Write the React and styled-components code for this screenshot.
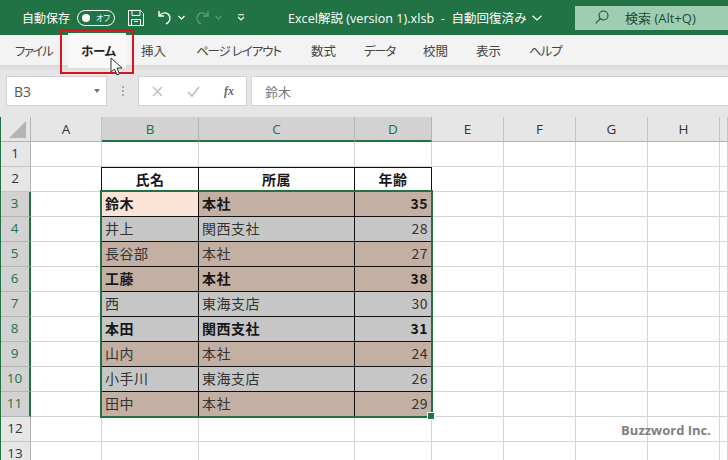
import React from "react";
import styled, { createGlobalStyle } from "styled-components";

const Global = createGlobalStyle`
  html, body { margin: 0; padding: 0; background: #fff; overflow: hidden; }
  #root { width: 728px; height: 460px; }
`;
const JP = `"Open Sans", "Noto Sans CJK JP", sans-serif`;
const Page = styled.div`
  position: relative; width: 728px; height: 460px; overflow: hidden;
  font-family: ${JP}; background: #fff; display: flex; flex-direction: column;
`;
const TitleBar = styled.header`
  height: 35px; flex: none; background: #217346; color: #fff;
  display: flex; align-items: center; font-size: 12px; padding-left: 22px; box-sizing: border-box;
`;
const Autosave = styled.span` width: 48px; font-size: 12px; white-space: nowrap; `;
const Toggle = styled.span`
  box-sizing: border-box; margin-left: 7px; width: 38px; height: 16px; border: 1px solid #fff; border-radius: 8px;
  display: flex; align-items: center; padding: 0 4px; gap: 6px; font-size: 8px; flex: none; font-feature-settings: "palt"; white-space: nowrap;
  i { width: 8px; height: 8px; border-radius: 50%; background: #fff; flex: none; }
`;
const QatIcon = styled.svg`
  flex: none; margin-left: ${p => p.$gap}px; display: block; fill: none; stroke: ${p => p.$dim ? "#5d9a78" : "#fff"};
`;
const DocTitle = styled.span`
  margin-left: 43px; font-size: 12.5px; white-space: pre; width: 256px; flex: none; display: flex; align-items: center; gap: 5px; letter-spacing: 0.05px;
  svg { flex: none; }
`;
const Search = styled.div`
  margin-left: auto; width: 153px; height: 24px; align-self: flex-start; margin-top: 6px; background: #9fcdb1; color: #1d4a33;
  display: flex; align-items: center; font-size: 13px; padding: 0 0 2px 20px; gap: 16px; box-sizing: border-box; white-space: nowrap;
`;
const Tabs = styled.nav`
  height: 30px; flex: none; background: #f3f3f3; display: flex; align-items: center; gap: 29px; padding-left: 15px;
  font-size: 12.5px; color: #444; box-sizing: border-box; font-feature-settings: "palt";
`;
const Tab = styled.span`
  width: ${p => p.$w}px; flex: none; letter-spacing: ${p => p.$track || 0}px;
  white-space: nowrap; position: relative; z-index: 0; font-weight: ${p => p.$active ? 700 : 400}; color: ${p => p.$active ? "#222" : "#444"};
  ${p => p.$active && `&::before { content: ""; position: absolute; z-index: -1; inset: -8px -14px -8px -13px; background: #f9f8f7; }`}
`;
const FormulaArea = styled.section`
  height: 52px; flex: none; background: linear-gradient(#d8d8d8 0, #e6e6e6 7px); display: flex; padding: 11px 0 0 6px;
  box-sizing: border-box; align-items: flex-start;
`;
const NameBox = styled.div`
  box-sizing: border-box; width: 101px; height: 30px; background: #fff; border: 1px solid #d2d2d2; font-size: 14px; color: #555;
  display: flex; align-items: center; justify-content: space-between; padding: 0 6px 0 7px;
  i { width: 0; height: 0; border: 3.5px solid transparent; border-top: 4px solid #777; margin-top: 3px; }
`;
const Dots = styled.div`
  width: 31px; height: 30px; display: flex; flex-direction: column; align-items: center; justify-content: center; gap: 2px;
  i { width: 2px; height: 2px; background: #aaa; }
`;
const FnBox = styled.div`
  box-sizing: border-box; width: 109px; height: 30px; background: #fff; border: 1px solid #d2d2d2; display: flex; align-items: center;
  padding-left: 13px; gap: 24px; color: #666;
`;
const Fx = styled.span` font-family: "Liberation Serif", serif; font-style: italic; font-weight: 700; font-size: 12px; color: #666; `;
const Input = styled.div`
  box-sizing: border-box; margin-left: 4px; flex: 1; height: 30px; background: #fff; border: 1px solid #d2d2d2; border-right: 0;
  font-size: 13px; color: #777; display: flex; align-items: center; padding-left: 13px;
`;
const Sheet = styled.main`
  position: relative; flex: none; display: grid; height: 343px; overflow: hidden;
  grid-template-columns: 31px 71px 97px 156px 77px 72px 72px 72px 72px 8px;
  grid-template-rows: 25px repeat(13, 25px);
  font-size: 14px; color: #222; font-family: "Noto Sans CJK JP", sans-serif;
  &::before { content: ""; position: absolute; left: 0; top: 0; bottom: 0; width: 1px; background: #217346; z-index: 3; }
`;
const Corner = styled.div`
  background: #e6e6e6; border-right: 1px solid #b4b4b4; border-bottom: 1px solid #b4b4b4; box-sizing: border-box; position: relative;
  svg { position: absolute; right: 4px; bottom: 3px; }
`;
const ColHead = styled.div`
  box-sizing: border-box; display: flex; align-items: center; justify-content: center; font-size: 13.5px; font-family: "Open Sans", sans-serif;
  background: ${p => p.$on ? "#d2d2d2" : "#e6e6e6"}; color: ${p => p.$on ? "#217346" : "#333"};
  border-right: 1px solid ${p => p.$on ? "#b4b4b4" : "#c4c4c4"};
  border-bottom: ${p => p.$on ? "2px solid #217346" : "1px solid #b4b4b4"};
`;
const RowHead = styled.div`
  box-sizing: border-box; display: flex; align-items: center; justify-content: center; font-size: 13.5px; font-family: "Open Sans", sans-serif;
  padding-bottom: 2px;
  background: ${p => p.$on ? "#d2d2d2" : "#e6e6e6"}; color: ${p => p.$on ? "#217346" : "#333"};
  border-right: ${p => p.$on ? "2px solid #217346" : "1px solid #b4b4b4"};
  border-bottom: 1px solid ${p => p.$on ? "#b4b4b4" : "#c4c4c4"};
`;
const Cell = styled.div`
  box-sizing: border-box; border-right: 1px solid ${p => p.$edge ? "#111" : "#d4d4d4"}; border-bottom: 1px solid #d4d4d4;
`;
const Data = styled.div`
  box-sizing: border-box; display: flex; align-items: center; white-space: nowrap; overflow: hidden;
  padding: 0 3px 2px; font-size: 14px; letter-spacing: 0.5px; color: ${p => p.$bold ? "#181818" : "#333"};
  justify-content: ${p => p.$align || "flex-start"};
  font-weight: ${p => p.$bold ? 700 : 400};
  background: ${p => p.$bg};
  border-right: 1px solid #111; border-bottom: 1px solid #111;
  ${p => p.$top && "border-top: 1px solid #111;"}
`;
const Selection = styled.div`
  position: absolute; left: 100px; top: 73px; width: 333px; height: 228px; box-sizing: border-box;
  border: 2px solid #217346; pointer-events: none; z-index: 2;
  i { position: absolute; right: -4px; bottom: -4px; width: 6px; height: 6px; background: #217346; border: 1px solid #fff; }
`;
const Watermark = styled.div`
  position: absolute; right: 17px; bottom: 21px; color: #808080; font: 700 13px "Open Sans", sans-serif; z-index: 2;
`;
const Callout = styled.div`
  position: absolute; left: 60px; top: 29px; width: 74px; height: 45px; box-sizing: border-box; border: 2.5px solid #d9141c; z-index: 4;
`;
const Pointer = styled.svg` position: absolute; left: 110px; top: 57px; z-index: 5; `;

const tabs = [
  ["ファイル", 37, -1.5], ["ホーム", 31, -0.3, true], ["挿入", 26, 0], ["ページ レイアウト", 86, -1.1],
  ["数式", 24, 0], ["データ", 30, -1.3], ["校閲", 24, 0], ["表示", 24, 0], ["ヘルプ", 32, -1],
];
const cols = ["A", "B", "C", "D", "E", "F", "G", "H", ""];
const T = "#c3b0a3", G = "#c6c6c6", P = "#fbe3d6";
const rows = [
  ["鈴木", "本社", 35, T, true, P],
  ["井上", "関西支社", 28, G],
  ["長谷部", "本社", 27, T],
  ["工藤", "本社", 38, T, true],
  ["西", "東海支店", 30, G],
  ["本田", "関西支社", 31, G, true],
  ["山内", "本社", 24, T],
  ["小手川", "東海支店", 26, G],
  ["田中", "本社", 29, T],
];

const Blank = ({ n }) => Array.from({ length: n }, (_, i) => <Cell key={i} />);

export default function App() {
  return (
    <Page>
      <Global />
      <TitleBar>
        <Autosave>自動保存</Autosave>
        <Toggle><i />オフ</Toggle>
        <QatIcon $gap={13} width="16" height="16" viewBox="0 0 16 16" strokeWidth="1">
          <path d="M.5.5h12l3 3v12H.5z M4 .5v5h8v-5 M3.5 15.5v-6h9v6 M6 11.5h4" />
        </QatIcon>
        <QatIcon $gap={13} width="16" height="16" viewBox="0 0 16 16" strokeWidth="1.4">
          <path d="M2 1v5h5M2 6c3-4 8-4 10-1s1 7-3 9" />
        </QatIcon>
        <QatIcon $gap={5} width="7" height="5" viewBox="0 0 7 5" strokeWidth="1.2"><path d="M.5 1l3 3 3-3" /></QatIcon>
        <QatIcon $gap={9} $dim width="16" height="16" viewBox="0 0 16 16" strokeWidth="1.4">
          <path d="M14 1v5H9M14 6c-3-4-8-4-10-1s-1 7 3 9" />
        </QatIcon>
        <QatIcon $gap={5} $dim width="7" height="5" viewBox="0 0 7 5" strokeWidth="1.2"><path d="M.5 1l3 3 3-3" /></QatIcon>
        <QatIcon $gap={15} width="8" height="7" viewBox="0 0 8 7" strokeWidth="1.1"><path d="M1 .7h6M1 3l3 3 3-3" /></QatIcon>
        <DocTitle>
          {"Excel解説 (version 1).xlsb  -  自動回復済み"}
          <svg width="10" height="6" viewBox="0 0 10 6" fill="none" stroke="#fff" strokeWidth="1.2"><path d="M.5.7L5 5l4.500-4.300" /></svg>
        </DocTitle>
        <Search>
          <svg width="14" height="14" viewBox="0 0 14 14" fill="none" stroke="#1d4a33" strokeWidth="1.1">
            <circle cx="8.500" cy="5.500" r="4.500" /><path d="M5.300 8.700L.7 13.300" />
          </svg>
          検索 (Alt+Q)
        </Search>
      </TitleBar>
      <Tabs>
        {tabs.map(([label, w, track, active]) => <Tab key={label} $w={w} $track={track} $active={active}>{label}</Tab>)}
      </Tabs>
      <FormulaArea>
        <NameBox>B3<i /></NameBox>
        <Dots><i /><i /><i /></Dots>
        <FnBox>
          <svg width="11" height="11" viewBox="0 0 11 11" fill="none" stroke="#bdbdbd" strokeWidth="1.4"><path d="M1 1l9 9M10 1l-9 9" /></svg>
          <svg width="13" height="11" viewBox="0 0 13 11" fill="none" stroke="#bdbdbd" strokeWidth="1.6"><path d="M1 6l4 4 7-9" /></svg>
          <Fx>fx</Fx>
        </FnBox>
        <Input>鈴木</Input>
      </FormulaArea>
      <Sheet>
        <Corner>
          <svg width="17" height="17" viewBox="0 0 17 17"><path d="M17 0v17H0z" fill="#b4b4b4" /></svg>
        </Corner>
        {cols.map((c, i) => <ColHead key={i} $on={c === "B" || c === "C" || c === "D"}>{c}</ColHead>)}

        <RowHead>1</RowHead><Blank n={9} />

        <RowHead>2</RowHead><Cell $edge />
        <Data $top $bold $align="center">氏名</Data>
        <Data $top $bold $align="center">所属</Data>
        <Data $top $bold $align="center">年齢</Data>
        <Blank n={5} />

        {rows.map(([name, org, age, bg, bold, first], i) => (
          <React.Fragment key={name}>
            <RowHead $on>{i + 3}</RowHead><Cell />
            <Data $bg={first || bg} $bold={bold}>{name}</Data>
            <Data $bg={bg} $bold={bold}>{org}</Data>
            <Data $bg={bg} $bold={bold} $align="flex-end">{age}</Data>
            <Blank n={5} />
          </React.Fragment>
        ))}

        <RowHead>12</RowHead><Blank n={9} />
        <RowHead>13</RowHead><Blank n={9} />
        <Selection><i /></Selection>
        <Watermark>Buzzword Inc.</Watermark>
      </Sheet>
      <Callout />
      <Pointer width="14" height="21" viewBox="0 0 14 21">
        <path d="M1 1v14l3.500-3 2.500 6 2.500-1-2.500-6H12z" fill="#fff" stroke="#333" strokeWidth="1" />
      </Pointer>
    </Page>
  );
}
